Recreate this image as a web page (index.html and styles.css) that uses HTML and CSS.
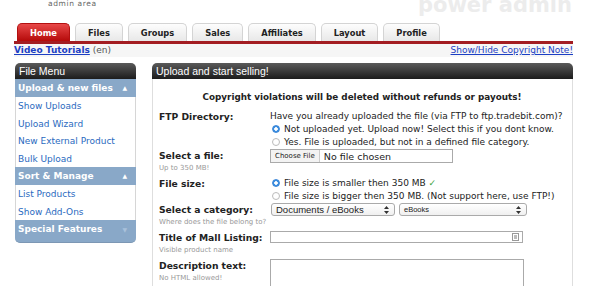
FILE: index.html
```html
<!DOCTYPE html>
<html lang="en">
<head>
    <meta charset="UTF-8">
    <title>Tradebit - power admin</title>
    <link rel="stylesheet" href="styles.css">
</head>
<body>
    <div class="page">
        <header class="top">
            <span class="admin-area">admin area</span>
            <span class="brand">power admin</span>
        </header>

        <nav class="tabs">
            <a class="tab active" href="#">Home</a>
            <a class="tab" href="#">Files</a>
            <a class="tab" href="#">Groups</a>
            <a class="tab" href="#">Sales</a>
            <a class="tab" href="#">Affiliates</a>
            <a class="tab" href="#">Layout</a>
            <a class="tab" href="#">Profile</a>
        </nav>

        <div class="subbar">
            <span><a class="tut-link" href="#">Video Tutorials</a> <span class="lang">(en)</span></span>
            <a class="copy-toggle" href="#">Show/Hide Copyright Note!</a>
        </div>

        <div class="layout">
            <aside class="sidebar">
                <div class="box-head">File Menu</div>
                <div class="side-section">Upload &amp; new files <span class="arrow">&#9650;</span></div>
                <ul class="side-list">
                    <li><a href="#">Show Uploads</a></li>
                    <li><a href="#">Upload Wizard</a></li>
                    <li><a href="#">New External Product</a></li>
                    <li><a href="#">Bulk Upload</a></li>
                </ul>
                <div class="side-section">Sort &amp; Manage <span class="arrow">&#9650;</span></div>
                <ul class="side-list">
                    <li><a href="#">List Products</a></li>
                    <li><a href="#">Show Add-Ons</a></li>
                </ul>
                <div class="side-section last">Special Features <span class="arrow dim">&#9660;</span></div>
            </aside>

            <main class="panel">
                <div class="box-head">Upload and start selling!</div>
                <div class="panel-body">
                    <p class="notice">Copyright violations will be deleted without refunds or payouts!</p>

                    <div class="row tight">
                        <div class="label">FTP Directory:</div>
                        <div class="value">
                            <div class="line">Have you already uploaded the file (via FTP to ftp.tradebit.com)?</div>
                            <div class="line"><span class="radio on"></span>Not uploaded yet. Upload now! Select this if you dont know.</div>
                            <div class="line"><span class="radio"></span>Yes. File is uploaded, but not in a defined file category.</div>
                        </div>
                    </div>

                    <div class="row">
                        <div class="label">Select a file:<small>Up to 350 MB!</small></div>
                        <div class="value">
                            <div class="file-input"><span class="file-btn">Choose File</span>No file chosen</div>
                        </div>
                    </div>

                    <div class="row tight">
                        <div class="label">File size:</div>
                        <div class="value">
                            <div class="line"><span class="radio on"></span>File size is smaller then 350 MB <span class="ok">&#10003;</span></div>
                            <div class="line"><span class="radio"></span>File size is bigger then 350 MB. (Not support here, use FTP!)</div>
                        </div>
                    </div>

                    <div class="row">
                        <div class="label">Select a category:<small>Where does the file belong to?</small></div>
                        <div class="value selects">
                            <div class="select main-cat">Documents / eBooks
                                <svg class="updown" width="5" height="8" viewBox="0 0 5 8"><path d="M2.5 0L5 3H0z M2.5 8L0 5h5z" fill="#333"/></svg>
                            </div>
                            <div class="select sub-cat">eBooks
                                <svg class="updown" width="5" height="8" viewBox="0 0 5 8"><path d="M2.5 0L5 3H0z M2.5 8L0 5h5z" fill="#333"/></svg>
                            </div>
                        </div>
                    </div>

                    <div class="row">
                        <div class="label">Title of Mall Listing:<small>Visible product name</small></div>
                        <div class="value">
                            <div class="text-input">
                                <svg width="7" height="8" viewBox="0 0 7 8"><rect x="0.5" y="0.5" width="6" height="7" fill="#fff" stroke="#999"/><rect x="2" y="2" width="3" height="4" fill="#bbb"/></svg>
                            </div>
                        </div>
                    </div>

                    <div class="row">
                        <div class="label">Description text:<small>No HTML allowed!</small></div>
                        <div class="value">
                            <div class="textarea"></div>
                        </div>
                    </div>
                </div>
            </main>
        </div>
    </div>
</body>
</html>
```

FILE: styles.css
```css
* {
    margin: 0;
    padding: 0;
    box-sizing: border-box;
}

body {
    background: white;
    font-family: 'DejaVu Sans', Verdana, sans-serif;
    font-size: 9px;
    color: #222;
    overflow: hidden;
}

a {
    text-decoration: none;
}

.page {
    width: 559px;
    margin-left: 14px;
}

/* header */

.top {
    height: 23px;
    display: flex;
    justify-content: space-between;
    align-items: flex-start;
    overflow: hidden;
}

.admin-area {
    margin: -1px 0 0 34px;
    font-size: 7.5px;
    letter-spacing: 0.6px;
    color: #666;
}

.brand {
    margin: -7px 1px 0 0;
    font-size: 21px;
    font-weight: bold;
    line-height: 24px;
    color: #ececec;
}

/* tabs */

.tabs {
    display: flex;
    gap: 5px;
    padding-left: 3px;
    border-bottom: 3px solid #a31d22;
}

.tab {
    height: 18px;
    line-height: 18px;
    padding: 0 12px;
    border: 1px solid #d4d4d4;
    border-bottom: none;
    border-radius: 5px 5px 0 0;
    background: linear-gradient(#fdfdfd, #e8e8e8);
    color: #222;
    font-size: 8.3px;
    font-weight: bold;
}

.tab.active {
    background: linear-gradient(#e84848, #b50a0a);
    border-color: #b31010;
    color: white;
}

.subbar {
    display: flex;
    justify-content: space-between;
    height: 13px;
    line-height: 13px;
    background: #f6f6f6;
}

.tut-link {
    color: #1c3fc4;
    font-weight: bold;
    text-decoration: underline;
}

.lang {
    color: #555;
}

.copy-toggle {
    color: #1c3fc4;
    text-decoration: underline;
}

/* columns */

.layout {
    display: flex;
    align-items: flex-start;
    gap: 16px;
    margin-top: 6px;
}

.box-head {
    height: 16px;
    line-height: 16px;
    padding-left: 4px;
    border-radius: 5px 5px 0 0;
    background: linear-gradient(#5a5a5a, #1c1c1c);
    color: white;
    font-family: 'Liberation Sans', Arial, sans-serif;
    font-size: 10.5px;
}

/* sidebar */

.sidebar {
    width: 121px;
    margin-left: 1px;
}

.side-section {
    display: flex;
    justify-content: space-between;
    height: 18px;
    line-height: 18px;
    padding: 0 9px 0 3px;
    background: #89a8c8;
    color: white;
    font-weight: bold;
    font-size: 9px;
}

.side-section.last {
    height: 23px;
    line-height: 19px;
    border-radius: 0 0 5px 5px;
    border-bottom: 1px solid #7c97b4;
}

.arrow {
    font-size: 6px;
}

.arrow.dim {
    color: #a9c1db;
}

.side-list {
    list-style: none;
    border-left: 1px solid #d6d6d6;
    border-right: 1px solid #d6d6d6;
    background: white;
}

.side-list li {
    height: 17.5px;
    line-height: 19px;
    padding-left: 2px;
}

.side-list a {
    color: #2a6ac0;
}

/* main panel */

.panel {
    width: 421px;
}

.panel-body {
    border: 1px solid #dedede;
    border-top: none;
    padding: 12px 7px 20px 6px;
    background: white;
}

.notice {
    text-align: center;
    font-weight: bold;
    font-size: 8.8px;
    line-height: 13px;
    margin-bottom: 6px;
}

.row {
    display: grid;
    grid-template-columns: 111px 1fr;
    padding-bottom: 3px;
}

.row.tight {
    padding-bottom: 0;
}

.label {
    font-weight: bold;
    font-size: 9.2px;
    line-height: 13px;
}

.label small {
    display: block;
    font-weight: normal;
    font-size: 7px;
    line-height: 12px;
    color: #999;
}

.line {
    line-height: 13px;
    white-space: nowrap;
}

.radio {
    display: inline-block;
    width: 8px;
    height: 8px;
    margin: 0 4px 0 2px;
    border: 1px solid #bbb;
    border-radius: 50%;
    background: white;
    vertical-align: -1px;
}

.radio.on {
    border-color: #3a86d8;
    background: radial-gradient(circle, white 0 1.5px, #3b8ee0 2px);
}

.ok {
    color: #3aa23a;
}

.file-input {
    display: flex;
    align-items: center;
    width: 183px;
    height: 14px;
    border: 1px solid #aaa;
    font-size: 9.5px;
}

.file-btn {
    height: 100%;
    line-height: 12px;
    padding: 0 4px;
    margin-right: 4px;
    border-right: 1px solid #ccc;
    background: #f3f3f3;
    font-size: 7px;
}

.selects {
    display: flex;
    gap: 4px;
}

.select {
    display: flex;
    justify-content: space-between;
    align-items: center;
    height: 13px;
    padding: 0 5px 0 4px;
    border: 1px solid #aaa;
    border-radius: 3px;
    background: linear-gradient(white, #f0f0f0);
    font-family: 'Liberation Sans', Arial, sans-serif;
}

.main-cat {
    width: 124px;
    margin-left: 1px;
    font-size: 9.5px;
}

.sub-cat {
    width: 128px;
    font-size: 7.5px;
}

.text-input {
    display: flex;
    justify-content: flex-end;
    align-items: center;
    width: 253px;
    height: 12px;
    padding-right: 3px;
    border: 1px solid #aaa;
}

.textarea {
    width: 254px;
    height: 40px;
    border: 1px solid #aaa;
}
```
